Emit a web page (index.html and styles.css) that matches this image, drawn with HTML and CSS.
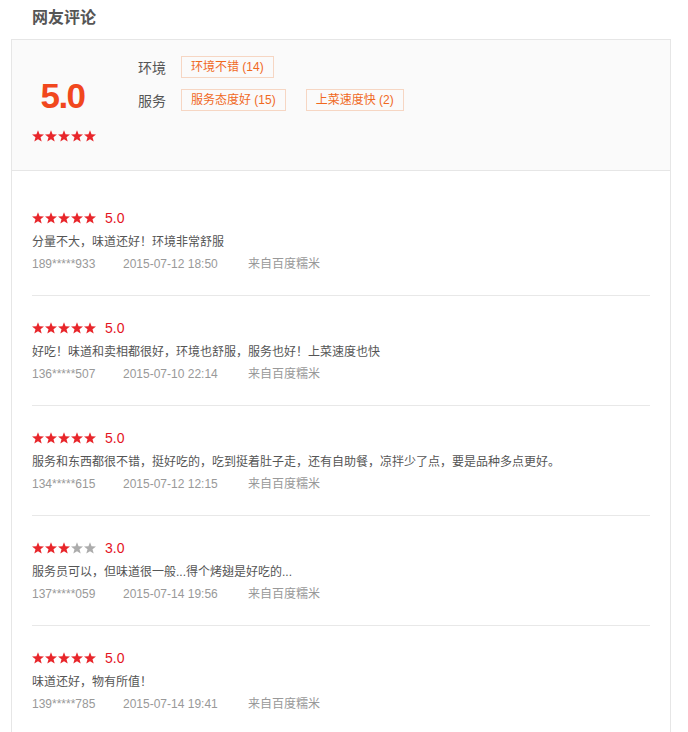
FILE: index.html
```html
<!DOCTYPE html>
<html lang="zh-CN">
<head>
<meta charset="utf-8">
<title>网友评论</title>
<link rel="stylesheet" href="styles.css">
</head>
<body>
<svg class="defs" width="0" height="0" aria-hidden="true">
  <defs>
    <symbol id="star" viewBox="0 0 12 12">
      <polygon points="6,0.2 7.55,4.35 12,4.55 8.5,7.3 9.7,11.6 6,9.15 2.3,11.6 3.5,7.3 0,4.55 4.45,4.35"/>
    </symbol>
  </defs>
</svg>
<div class="page">
  <h2 class="title">网友评论</h2>
  <div class="card">
    <div class="summary">
      <div class="score-col">
        <div class="score">5.0</div>
        <div class="stars">
          <svg class="star on"><use href="#star"/></svg><svg class="star on"><use href="#star"/></svg><svg class="star on"><use href="#star"/></svg><svg class="star on"><use href="#star"/></svg><svg class="star on"><use href="#star"/></svg>
        </div>
      </div>
      <div class="tags">
        <div class="tag-row">
          <span class="label">环境</span>
          <span class="tag">环境不错 (14)</span>
        </div>
        <div class="tag-row">
          <span class="label">服务</span>
          <span class="tag">服务态度好 (15)</span>
          <span class="tag">上菜速度快 (2)</span>
        </div>
      </div>
    </div>
    <div class="reviews">
      <div class="review">
        <div class="rating">
          <div class="stars"><svg class="star on"><use href="#star"/></svg><svg class="star on"><use href="#star"/></svg><svg class="star on"><use href="#star"/></svg><svg class="star on"><use href="#star"/></svg><svg class="star on"><use href="#star"/></svg></div>
          <span class="num">5.0</span>
        </div>
        <p class="text">分量不大，味道还好！环境非常舒服</p>
        <div class="meta"><span class="user">189*****933</span><span class="date">2015-07-12 18:50</span><span class="src">来自百度糯米</span></div>
      </div>
      <div class="review">
        <div class="rating">
          <div class="stars"><svg class="star on"><use href="#star"/></svg><svg class="star on"><use href="#star"/></svg><svg class="star on"><use href="#star"/></svg><svg class="star on"><use href="#star"/></svg><svg class="star on"><use href="#star"/></svg></div>
          <span class="num">5.0</span>
        </div>
        <p class="text">好吃！味道和卖相都很好，环境也舒服，服务也好！上菜速度也快</p>
        <div class="meta"><span class="user">136*****507</span><span class="date">2015-07-10 22:14</span><span class="src">来自百度糯米</span></div>
      </div>
      <div class="review">
        <div class="rating">
          <div class="stars"><svg class="star on"><use href="#star"/></svg><svg class="star on"><use href="#star"/></svg><svg class="star on"><use href="#star"/></svg><svg class="star on"><use href="#star"/></svg><svg class="star on"><use href="#star"/></svg></div>
          <span class="num">5.0</span>
        </div>
        <p class="text">服务和东西都很不错，挺好吃的，吃到挺着肚子走，还有自助餐，凉拌少了点，要是品种多点更好。</p>
        <div class="meta"><span class="user">134*****615</span><span class="date">2015-07-12 12:15</span><span class="src">来自百度糯米</span></div>
      </div>
      <div class="review">
        <div class="rating">
          <div class="stars"><svg class="star on"><use href="#star"/></svg><svg class="star on"><use href="#star"/></svg><svg class="star on"><use href="#star"/></svg><svg class="star off"><use href="#star"/></svg><svg class="star off"><use href="#star"/></svg></div>
          <span class="num">3.0</span>
        </div>
        <p class="text">服务员可以，但味道很一般...得个烤翅是好吃的...</p>
        <div class="meta"><span class="user">137*****059</span><span class="date">2015-07-14 19:56</span><span class="src">来自百度糯米</span></div>
      </div>
      <div class="review">
        <div class="rating">
          <div class="stars"><svg class="star on"><use href="#star"/></svg><svg class="star on"><use href="#star"/></svg><svg class="star on"><use href="#star"/></svg><svg class="star on"><use href="#star"/></svg><svg class="star on"><use href="#star"/></svg></div>
          <span class="num">5.0</span>
        </div>
        <p class="text">味道还好，物有所值！</p>
        <div class="meta"><span class="user">139*****785</span><span class="date">2015-07-14 19:41</span><span class="src">来自百度糯米</span></div>
      </div>
    </div>
  </div>
</div>
</body>
</html>
```

FILE: styles.css
```css
* { box-sizing: border-box; }
html, body { margin: 0; padding: 0; background: #fff; }
body {
  font-family: "Liberation Sans", "Noto Sans CJK SC", sans-serif;
  color: #555;
  font-size: 12px;
}
.defs { position: absolute; width: 0; height: 0; overflow: hidden; }

.page { padding-left: 11px; }

.title {
  margin: 0;
  height: 39px;
  padding-left: 21px;
  font-size: 16px;
  line-height: 36px;
  font-weight: bold;
  color: #555;
}

.card {
  width: 660px;
  border: 1px solid #e6e6e6;
}

.summary {
  display: flex;
  height: 131px;
  background: #fafafa;
  border-bottom: 1px solid #e6e6e6;
  padding-left: 20px;
}

.score-col {
  width: 64px;
  display: flex;
  flex-direction: column;
  align-items: center;
  padding-top: 38px;
}
.score {
  font-size: 35px;
  line-height: 36px;
  font-weight: bold;
  letter-spacing: -1.5px;
  color: #f1471d;
  padding-right: 3px;
}
.score-col .stars { margin-top: 16px; }

.stars { display: flex; gap: 1px; height: 12px; }
.star { width: 12px; height: 12px; display: block; }
.star.on { fill: #e8262b; }
.star.off { fill: #acacac; }

.tags {
  margin-left: 42px;
  padding-top: 16px;
  display: flex;
  flex-direction: column;
  gap: 11px;
}
.tag-row {
  display: flex;
  align-items: center;
  height: 22px;
}
.label {
  font-size: 14px;
  color: #555;
  width: 43px;
}
.tag {
  height: 22px;
  line-height: 20px;
  padding: 0 9px;
  border: 1px solid #f6d6c3;
  color: #f0691f;
  font-size: 12px;
  margin-right: 20px;
}

.reviews { padding: 15px 20px 0; }
.review {
  padding: 21px 0 20px;
  border-bottom: 1px solid #e8e8e8;
}
.rating {
  display: flex;
  align-items: center;
  height: 22px;
}
.num {
  margin-left: 9px;
  font-size: 14px;
  color: #e4141f;
}
.text {
  margin: 2px 0 0;
  line-height: 22px;
  color: #555;
}
.meta {
  display: flex;
  line-height: 22px;
  color: #999;
}
.user { width: 91px; }
.date { width: 125px; }
```
